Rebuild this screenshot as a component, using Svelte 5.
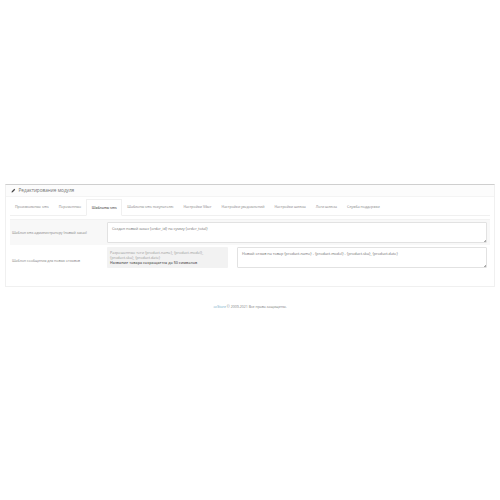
<script>
	const tabs = [
		'Произвольные sms',
		'Переменные',
		'Шаблоны sms',
		'Шаблоны sms покупателю',
		'Настройки Viber',
		'Настройки уведомлений',
		'Настройки шлюза',
		'Логи шлюза',
		'Служба поддержки'
	];
	const active = 'Шаблоны sms';
</script>

<div class="page">
	<section class="panel">
		<header class="panel-heading">
			<svg class="pencil" viewBox="0 0 10 10" aria-hidden="true">
				<path d="M1 9 L1.6 6.6 L6.6 1.6 L8.4 3.4 L3.4 8.4 Z" />
			</svg>
			<span>Редактирование модуля</span>
		</header>
		<div class="panel-body">
			<nav class="tabs">
				{#each tabs as tab}
					<span class="tab" class:active={tab === active}>{tab}</span>
				{/each}
			</nav>
			<div class="row shaded">
				<span class="label">Шаблон sms администратору (новый заказ)</span>
				<div class="textarea">Создан новый заказ {'{'}order_id{'}'} на сумму {'{'}order_total{'}'}</div>
			</div>
			<div class="row plain">
				<span class="label">Шаблон сообщения для новых отзывов</span>
				<div class="split">
					<div class="hint">
						Разрешенные теги {'{'}product.name{'}'}, {'{'}product.model{'}'},<br />
						{'{'}product.sku{'}'}, {'{'}product.date{'}'}
						<strong>Название товара сокращается до 50 символов</strong>
					</div>
					<div class="textarea">Новый отзыв на товар {'{'}product.name{'}'} - {'{'}product.model{'}'} - {'{'}product.sku{'}'}, {'{'}product.date{'}'}</div>
				</div>
			</div>
		</div>
	</section>
	<footer class="footer"><span class="link">ocStore</span> © 2009-2021 Все права защищены.</footer>
</div>

<style>
	:global(body) {
		background: #fff;
	}

	.page {
		padding: 184px 5px 0;
		font-family: 'Open Sans', 'Liberation Sans', sans-serif;
		font-size: 3.5px;
		line-height: 5.2px;
		color: #808080;
	}

	.panel {
		height: 103px;
		box-sizing: border-box;
		border: 1px solid #f0f0f0;
		border-top: 1px solid #cfcfcf;
	}

	.panel-heading {
		display: flex;
		align-items: center;
		gap: 2.5px;
		height: 11px;
		padding: 0 5px;
		background: #fcfcfc;
		border-bottom: 1px solid #f4f4f4;
		font-size: 4.7px;
		color: #707070;
	}

	.pencil {
		width: 5px;
		height: 5px;
		fill: #444;
	}

	.panel-body {
		padding: 2px 4px 0;
	}

	.tabs {
		display: flex;
		height: 16px;
		border-bottom: 1px solid #f0f0f0;
		margin-bottom: 3px;
		font-size: 3.55px;
	}

	.tab {
		display: flex;
		align-items: center;
		padding: 0 5px;
		color: #808080;
		white-space: nowrap;
	}

	.tab.active {
		color: #606060;
		font-weight: 600;
		padding: 0 4.4px;
		border: 1px solid #f0f0f0;
		border-bottom: 1px solid #fff;
		height: 15px;
	}

	.row {
		display: grid;
		grid-template-columns: 97px 380px;
		width: 480px;
	}

	.shaded {
		height: 26px;
		align-items: center;
		background: #f8f8f8;
		border-top: 1px solid #f2f2f2;
		box-sizing: border-box;
	}

	.plain {
		margin-top: 2px;
	}

	.plain .label {
		margin-top: 11px;
	}

	.label {
		padding-left: 2px;
	}

	.split {
		display: grid;
		grid-template-columns: 121px 250px;
		column-gap: 9px;
		align-items: start;
	}

	.textarea {
		position: relative;
		box-sizing: border-box;
		height: 21px;
		padding: 3px 4px;
		background: #fff;
		border: 1px solid #e2e2e2;
		border-radius: 1px;
		font-size: 3.75px;
		color: #707070;
	}

	/* resize grip */
	.textarea::after {
		content: '';
		position: absolute;
		right: 0;
		bottom: 0;
		width: 3px;
		height: 3px;
		background: linear-gradient(135deg, transparent 55%, #aaa 55%);
	}

	.hint {
		box-sizing: border-box;
		height: 21px;
		padding: 3px;
		background: #f2f2f2;
		border-radius: 1px;
		font-size: 3.7px;
		color: #999;
	}

	.hint strong {
		display: block;
		color: #666;
		font-weight: 600;
	}

	.footer {
		margin-top: 17px;
		text-align: center;
		color: #808080;
	}

	.link {
		color: #6fa8c8;
	}
</style>
